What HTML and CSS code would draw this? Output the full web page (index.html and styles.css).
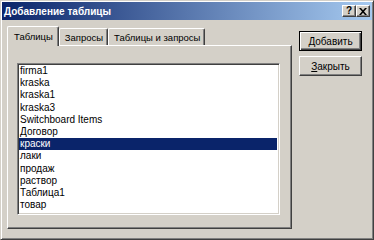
FILE: index.html
```html
<!DOCTYPE html>
<html>
<head>
<meta charset="utf-8">
<link rel="stylesheet" href="styles.css">
</head>
<body>
<div class="window">
  <div class="titlebar">
    <span class="title">Добавление таблицы</span>
    <div class="tbtns">
      <span class="tbtn help">?</span>
      <span class="tbtn close"><svg width="8" height="7" viewBox="0 0 8 7"><path d="M0 0h2l2 2.2L6 0h2L5 3.5 8 7H6L4 4.8 2 7H0l3-3.5z" fill="#000"/></svg></span>
    </div>
  </div>
  <div class="content">
    <div class="left">
      <div class="tabs">
        <span class="tab active">Таблицы</span>
        <span class="tab">Запросы</span>
        <span class="tab">Таблицы и запросы</span>
      </div>
      <div class="panel">
        <ul class="list">
          <li>firma1</li>
          <li>kraska</li>
          <li>kraska1</li>
          <li>kraska3</li>
          <li>Switchboard Items</li>
          <li>Договор</li>
          <li class="sel">краски</li>
          <li>лаки</li>
          <li>продаж</li>
          <li>раствор</li>
          <li>Таблица1</li>
          <li>товар</li>
        </ul>
      </div>
    </div>
    <div class="buttons">
      <button class="btn default"><u>Д</u>обавить</button>
      <button class="btn"><u>З</u>акрыть</button>
    </div>
  </div>
</div>
</body>
</html>
```
FILE: styles.css
```css
html, body {
  margin: 0;
  padding: 0;
  background: #d4d0c8;
}
body {
  font-family: "Liberation Sans", Arial, sans-serif;
  font-size: 10px;
  color: #000;
}
.window {
  box-sizing: border-box;
  width: 374px;
  height: 240px;
  background: #d4d0c8;
  border: 1px solid;
  border-color: #d4d0c8 #404040 #404040 #d4d0c8;
  box-shadow: inset 1px 1px #fff, inset -1px -1px #808080;
  padding: 1px;
}
.titlebar {
  height: 18px;
  background: linear-gradient(to right, #0a246a, #a6caf0);
  display: flex;
  align-items: center;
  justify-content: space-between;
  padding: 0 2px 0 2px;
}
.title {
  color: #fff;
  font-weight: bold;
  font-size: 10px;
}
.tbtns {
  display: flex;
}
.tbtn {
  box-sizing: border-box;
  width: 14px;
  height: 12px;
  background: #d4d0c8;
  border: 1px solid;
  border-color: #fff #404040 #404040 #fff;
  box-shadow: inset -1px -1px #808080;
  display: flex;
  align-items: center;
  justify-content: center;
  font-weight: bold;
  font-size: 10px;
  line-height: 10px;
}
.content {
  display: flex;
  padding: 6px 9px 0 5px;
}
.left {
  width: 285px;
  display: flex;
  flex-direction: column;
}
.tabs {
  display: flex;
  align-items: flex-end;
  height: 19px;
  position: relative;
  z-index: 1;
}
.tab {
  box-sizing: border-box;
  height: 17px;
  padding: 0 4px 0 5px;
  font-size: 9.5px;
  display: flex;
  align-items: center;
  border-top: 1px solid #fff;
  border-left: 1px solid #fff;
  border-right: 1px solid #404040;
  box-shadow: inset -1px 0 #808080;
  border-radius: 2px 2px 0 0;
  background: #d4d0c8;
}
.tab.active {
  height: 20px;
  margin-bottom: -1px;
  padding: 0 5px 1px 6px;
}
.panel {
  box-sizing: border-box;
  height: 184px;
  border: 1px solid;
  border-color: #fff #404040 #404040 #fff;
  box-shadow: inset -1px -1px #808080;
  padding: 17px 0 0 9px;
}
.list {
  box-sizing: border-box;
  list-style: none;
  margin: 0;
  width: 263px;
  height: 152px;
  background: #fff;
  border: 1px solid;
  border-color: #808080 #fff #fff #808080;
  box-shadow: inset 1px 1px #404040, inset -1px -1px #d4d0c8;
  padding: 1px 2px 0 1px;
}
.list li {
  height: 12.2px;
  line-height: 12.2px;
  padding-left: 1px;
  white-space: nowrap;
}
.list li.sel {
  background: #0a246a;
  color: #fff;
}
.buttons {
  display: flex;
  flex-direction: column;
  gap: 5px;
  margin-left: 7px;
  margin-top: 5px;
}
.btn {
  box-sizing: border-box;
  width: 63px;
  height: 20px;
  font-family: "Liberation Sans", Arial, sans-serif;
  font-size: 10px;
  color: #000;
  background: #d4d0c8;
  border: 1px solid;
  border-color: #fff #404040 #404040 #fff;
  box-shadow: inset -1px -1px #808080;
  padding: 0;
}
.btn.default {
  border: 1px solid #000;
  box-shadow: inset 1px 1px #fff, inset -1px -1px #404040, inset -2px -2px #808080;
}
.btn u {
  text-decoration: underline;
}
```
